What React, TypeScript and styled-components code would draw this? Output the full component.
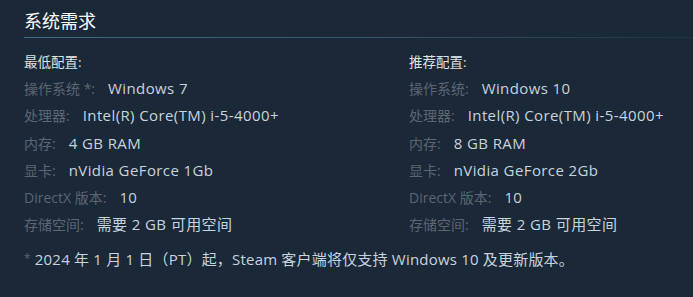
import * as React from 'react'
import styled, { createGlobalStyle } from 'styled-components'

const GlobalStyle = createGlobalStyle`
  html, body {
    margin: 0;
    padding: 0;
    background: #1b2838;
  }
  body {
    font-family: 'Open Sans', 'Noto Sans CJK SC', sans-serif;
    width: 693px;
    height: 297px;
    overflow: hidden;
  }
`

const Page = styled.div`
  padding: 8px 0 0 24px;
  height: 297px;
  box-sizing: border-box;
`

const Heading = styled.h2`
  margin: 0;
  font-size: 18px;
  font-weight: normal;
  line-height: 26px;
  color: #ffffff;
  padding-bottom: 4px;
  background-image: linear-gradient(
    to right,
    #3f6c86 0%,
    #34556b 55%,
    rgba(52, 85, 107, 0.2) 100%
  );
  background-size: 100% 1px;
  background-repeat: no-repeat;
  background-position: left bottom;
`

const Columns = styled.div`
  display: grid;
  grid-template-columns: 385px 1fr;
  margin-top: 13.5px;
`

const Column = styled.ul`
  list-style: none;
  margin: 0;
  padding: 0;
  font-size: 15px;
  letter-spacing: 0.4px;
`

const Title = styled.li`
  color: #dfe3e6;
  line-height: 20px;
  height: 20px;
  margin-bottom: 6.5px;
  font-size: 13.5px;
  letter-spacing: 0;
`

const Row = styled.li`
  line-height: 20px;
  height: 20px;
  margin-bottom: 7.3px;
  color: #c6d4df;
  white-space: nowrap;
`

const Label = styled.span`
  color: #5b6672;
  font-size: 14px;
  letter-spacing: 0;
  margin-right: 13px;
`

const Note = styled.p`
  margin: 7.5px 0 0;
  font-size: 15px;
  letter-spacing: 0.2px;
  line-height: 20px;
  color: #c6d4df;
  white-space: nowrap;
`

const Star = styled.span`
  color: #5b6672;
  margin-right: 4px;
  font-size: 12px;
  vertical-align: 2px;
`

type Spec = { label: string; value: string }

const minimum: Spec[] = [
  { label: '操作系统 *:', value: 'Windows 7' },
  { label: '处理器:', value: 'Intel(R) Core(TM) i-5-4000+' },
  { label: '内存:', value: '4 GB RAM' },
  { label: '显卡:', value: 'nVidia GeForce 1Gb' },
  { label: 'DirectX 版本:', value: '10' },
  { label: '存储空间:', value: '需要 2 GB 可用空间' },
]

const recommended: Spec[] = [
  { label: '操作系统:', value: 'Windows 10' },
  { label: '处理器:', value: 'Intel(R) Core(TM) i-5-4000+' },
  { label: '内存:', value: '8 GB RAM' },
  { label: '显卡:', value: 'nVidia GeForce 2Gb' },
  { label: 'DirectX 版本:', value: '10' },
  { label: '存储空间:', value: '需要 2 GB 可用空间' },
]

const SpecList = ({ title, specs }: { title: string; specs: Spec[] }) => (
  <Column>
    <Title>{title}</Title>
    {specs.map(s => (
      <Row key={s.label}>
        <Label>{s.label}</Label>
        {s.value}
      </Row>
    ))}
  </Column>
)

const App = () => (
  <Page>
    <GlobalStyle />
    <Heading>系统需求</Heading>
    <Columns>
      <SpecList title="最低配置:" specs={minimum} />
      <SpecList title="推荐配置:" specs={recommended} />
    </Columns>
    <Note>
      <Star>*</Star>
      2024 年 1 月 1 日（PT）起，Steam 客户端将仅支持 Windows 10 及更新版本。
    </Note>
  </Page>
)

export default App
